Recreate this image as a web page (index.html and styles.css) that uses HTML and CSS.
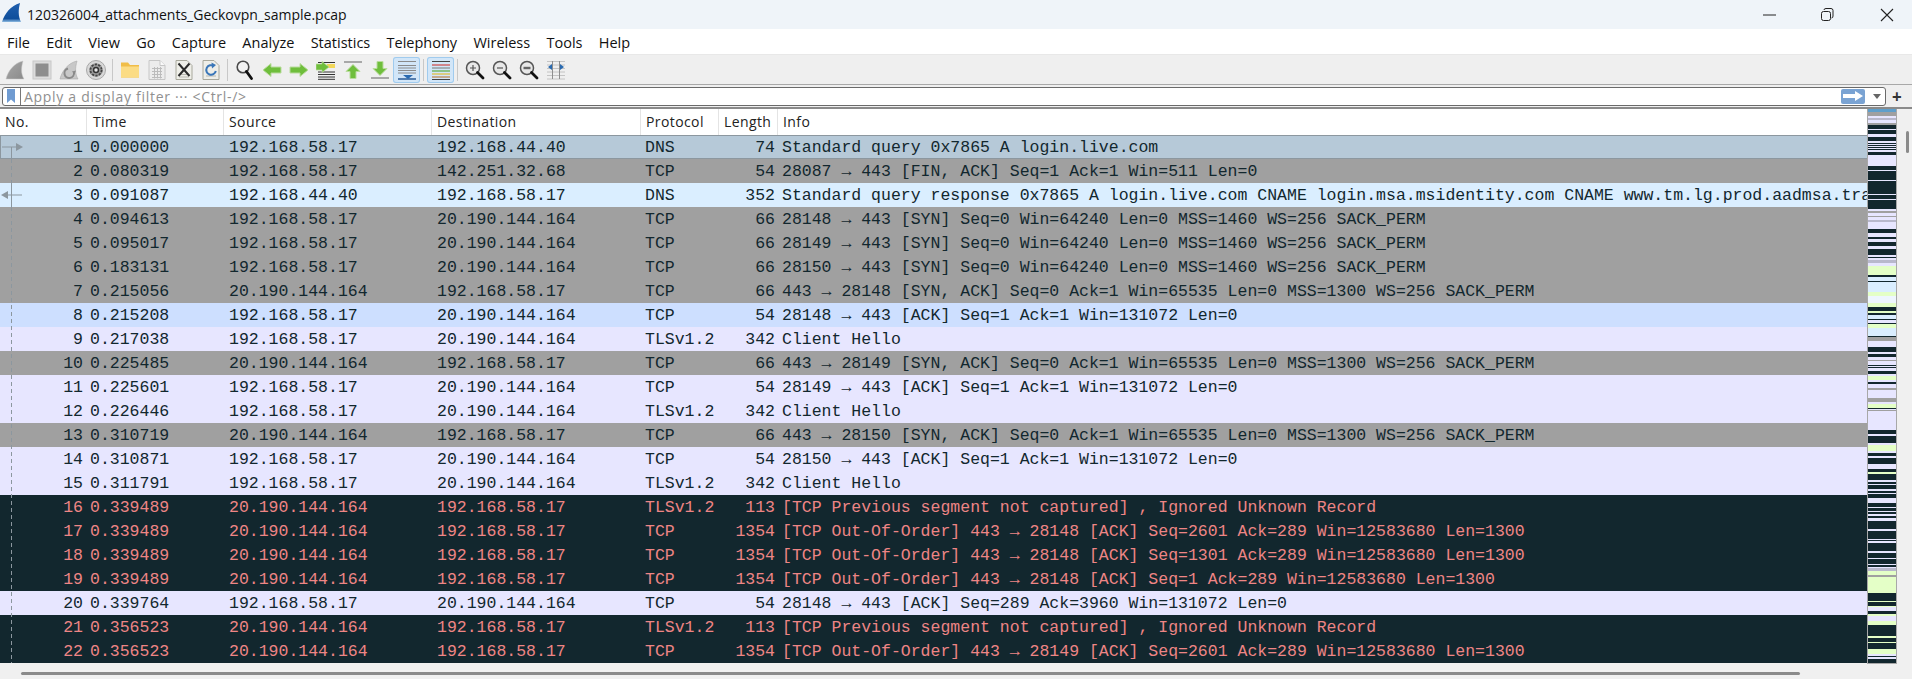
FILE: index.html
```html
<!DOCTYPE html>
<html lang="en">
<head>
<meta charset="utf-8">
<title>120326004_attachments_Geckovpn_sample.pcap</title>
<link rel="stylesheet" href="styles.css">
</head>
<body>
<div class="window">
  <header class="titlebar">
    <svg class="app-icon" viewBox="0 0 20 20"><defs><linearGradient id="finb" x1="0" y1="0" x2="0" y2="1"><stop offset="0" stop-color="#1f5fae"/><stop offset="0.82" stop-color="#0f4f9c"/><stop offset="1" stop-color="#8fbce2"/></linearGradient></defs><path d="M0 20 C3 11 9 3 19 0 C17 7 17 14 20 20 Z" fill="url(#finb)"/></svg>
    <span class="title-text">120326004_attachments_Geckovpn_sample.pcap</span>
    <div class="win-controls">
      <svg class="win-btn" viewBox="0 0 58 16"><path d="M0 8 H13" stroke="#222" stroke-width="1" fill="none"/></svg>
      <svg class="win-btn" viewBox="0 0 58 16"><rect x="0.500" y="4.500" width="9" height="9" rx="2" stroke="#222" fill="none"/><path d="M3 3 Q3 1.500 5 1.500 H10 Q12 1.500 12 3.500 V9 Q12 11 10.500 11" stroke="#222" fill="none"/></svg>
      <svg class="win-btn last" viewBox="0 0 16 16"><path d="M2 2 L14 14 M14 2 L2 14" stroke="#222" stroke-width="1.100" fill="none"/></svg>
    </div>
  </header>
  <nav class="menubar">
    <span>File</span><span>Edit</span><span>View</span><span>Go</span><span>Capture</span><span>Analyze</span><span>Statistics</span><span>Telephony</span><span>Wireless</span><span>Tools</span><span>Help</span>
  </nav>
  <div class="toolbar">
    <div class="tool"><svg viewBox="0 0 20 20"><defs><linearGradient id="fing" x1="0" y1="0" x2="1" y2="1"><stop offset="0" stop-color="#a8a8a8"/><stop offset="1" stop-color="#8a8a8a"/></linearGradient></defs><path d="M1 19 C3 11 9 3 18 1 C16 8 16 14 19 19 Z" fill="url(#fing)" stroke="#c8c8c8" stroke-width=".5"/></svg></div>
    <div class="tool"><svg viewBox="0 0 20 20"><rect x="1" y="1" width="18" height="18" fill="#dcdcdc" stroke="#c8c8c8"/><rect x="3.500" y="3.500" width="13" height="13" fill="#8e8e8e"/></svg></div>
    <div class="tool"><svg viewBox="0 0 20 20"><path d="M1 19 C3 11 9 3 18 1 C16 8 16 14 19 19 Z" fill="#c8c8c8" stroke="#aaa" stroke-width=".6"/><path d="M9 8.500 A4.800 4.800 0 1 0 15 12.500" fill="none" stroke="#8a8a8a" stroke-width="2"/><path d="M13 11.500 L17 10.500 L15.500 14.500 Z" fill="#8a8a8a"/></svg></div>
    <div class="tool"><svg viewBox="0 0 20 20"><circle cx="10" cy="10" r="9.500" fill="#d8d8d8" stroke="#a8a8a8"/><circle cx="10" cy="10" r="6.800" fill="#9a9a9a"/><circle cx="10" cy="10" r="5.600" fill="none" stroke="#444" stroke-width="1.800" stroke-dasharray="2.200 1.300"/><circle cx="10" cy="10" r="3.200" fill="#333"/><circle cx="10" cy="10" r="1.700" fill="#e6e6e6"/></svg></div>
    <i class="sep"></i>
    <div class="tool"><svg viewBox="0 0 20 20"><path d="M1 2.500 H8 L10 5 H19 V17.500 H1 Z" fill="#f0bd48"/><rect x="1" y="6.500" width="18" height="11" fill="#fbdc85"/></svg></div>
    <div class="tool"><svg viewBox="0 0 20 20"><path d="M2 .5 H13 L18 5.500 V19.500 H2 Z" fill="#ececec" stroke="#c6c6c6"/><path d="M13 .5 V5.500 H18" fill="#fafafa" stroke="#c6c6c6"/><path d="M5 8.500 H15 M5 11.500 H15 M5 14.500 H15 M5 17.500 H15 M7.500 7 V18.500 M10.500 7 V18.500 M13.500 7 V18.500" stroke="#bcbcbc"/></svg></div>
    <div class="tool"><svg viewBox="0 0 20 20"><path d="M2 .5 H13 L18 5.500 V19.500 H2 Z" fill="#eeeee8" stroke="#a8a89c"/><path d="M5 14.500 H15 M5 17 H15" stroke="#b8b8b0"/><path d="M4.500 3.500 L15.500 16 M15.500 3.500 L4.500 16" stroke="#2a2a2a" stroke-width="2"/></svg></div>
    <div class="tool"><svg viewBox="0 0 20 20"><path d="M2 .5 H13 L18 5.500 V19.500 H2 Z" fill="#eeeee8" stroke="#a8a89c"/><path d="M5 16 H15" stroke="#b8b8b0"/><path d="M12.800 6 A4.800 4.800 0 1 0 14.800 11" fill="none" stroke="#3a76b8" stroke-width="2"/><path d="M10.500 2.500 L15 5 L11 8.500 Z" fill="#3a76b8"/></svg></div>
    <i class="sep"></i>
    <div class="tool"><svg viewBox="0 0 20 20"><circle cx="8" cy="7" r="5.800" fill="#f2f2f2" stroke="#4a4a4a" stroke-width="1.600"/><path d="M11.500 11.500 L16.500 18.500" stroke="#111" stroke-width="2.800" stroke-linecap="round"/></svg></div>
    <div class="tool"><svg viewBox="0 0 20 20"><path d="M1 10 L9 3.500 V7 H19 V13 H9 V16.500 Z" fill="#6fbe3c" stroke="#b9dc9c"/></svg></div>
    <div class="tool"><svg viewBox="0 0 20 20"><path d="M19 10 L11 3.500 V7 H1 V13 H11 V16.500 Z" fill="#6fbe3c" stroke="#b9dc9c"/></svg></div>
    <div class="tool"><svg viewBox="0 0 20 20"><path d="M2 2.500 H19 M2 12 H19 M2 14.500 H19 M2 17 H19 M2 19.300 H19" stroke="#333"/><rect x="11" y="4" width="8" height="4" fill="#f2d75a"/><path d="M13 7 L6 1.500 V4 H0 V10 H6 V12.500 Z" fill="#6fbe3c" stroke="#b9dc9c" stroke-width=".7"/></svg></div>
    <div class="tool"><svg viewBox="0 0 20 20"><rect x="1" y="1" width="18" height="2" fill="#a8a8a8"/><path d="M10 4.500 L17 11.500 H13 V18.500 H7 V11.500 H3 Z" fill="#6fbe3c" stroke="#b9dc9c"/></svg></div>
    <div class="tool"><svg viewBox="0 0 20 20"><rect x="1" y="17" width="18" height="2" fill="#a8a8a8"/><path d="M10 15.500 L17 8.500 H13 V1.500 H7 V8.500 H3 Z" fill="#6fbe3c" stroke="#b9dc9c"/></svg></div>
    <div class="tool on"><svg viewBox="0 0 20 20"><path d="M1 1.500 H19 M1 5.500 H19 M1 8 H19 M1 10.500 H19 M1 13 H19" stroke="#8a8a8a"/><path d="M1 19 H19" stroke="#1d4f8e" stroke-width="1.400"/><path d="M6 15 H16 L11 19 Z" fill="#2a6ab0"/></svg></div>
    <i class="sep"></i>
    <div class="tool on"><svg viewBox="0 0 20 20"><path d="M1 1.500 H19" stroke="#444"/><path d="M1 5 H19" stroke="#d05050" stroke-width="1.300"/><path d="M1 8 H19" stroke="#777"/><path d="M1 11 H19" stroke="#66b04a" stroke-width="1.300"/><path d="M1 14 H19" stroke="#e0c040" stroke-width="1.300"/><path d="M1 17 H19" stroke="#c08a50" stroke-width="1.300"/><path d="M1 19.500 H19" stroke="#444"/></svg></div>
    <i class="sep"></i>
    <div class="tool"><svg viewBox="0 0 20 20"><circle cx="8" cy="8" r="6.500" fill="#e8e8e8" stroke="#555" stroke-width="1.500"/><path d="M5 8 H11 M8 5 V11" stroke="#555" stroke-width="1.200"/><path d="M12.500 12.500 L18 18" stroke="#111" stroke-width="2.800" stroke-linecap="round"/></svg></div>
    <div class="tool"><svg viewBox="0 0 20 20"><circle cx="8" cy="8" r="6.500" fill="#e8e8e8" stroke="#555" stroke-width="1.500"/><path d="M5 8 H11" stroke="#555" stroke-width="1.200"/><path d="M12.500 12.500 L18 18" stroke="#111" stroke-width="2.800" stroke-linecap="round"/></svg></div>
    <div class="tool"><svg viewBox="0 0 20 20"><circle cx="8" cy="8" r="6.500" fill="#e8e8e8" stroke="#555" stroke-width="1.500"/><rect x="4.500" y="6.800" width="7" height="2.400" fill="#666"/><path d="M12.500 12.500 L18 18" stroke="#111" stroke-width="2.800" stroke-linecap="round"/></svg></div>
    <div class="tool"><svg viewBox="0 0 20 20"><path d="M1 1.500 H19 M1 5 H19 M1 8.500 H19 M1 12 H19 M1 15.500 H19 M1 19 H19" stroke="#c4c4c4"/><path d="M6.500 1 V19 M13.500 1 V19" stroke="#8e8e8e"/><path d="M6 4 V10 L2 7 Z M14 4 V10 L18 7 Z" fill="#2a6ab0"/></svg></div>
  </div>
  <div class="filterbar">
    <div class="filter-input">
      <svg class="bookmark" viewBox="0 0 8 14"><path d="M0 0 H8 V14 L4 10.500 L0 14 Z" fill="#6f9bd1"/></svg>
      <span class="placeholder">Apply a display filter ··· &lt;Ctrl-/&gt;</span>
      <span class="apply"><svg viewBox="0 0 20 10"><path d="M0 3 H12 V0 L20 5 L12 10 V7 H0 Z" fill="#fff"/></svg></span>
      <span class="drop"></span>
    </div>
    <span class="plus">+</span>
  </div>
  <main class="content">
    <section class="packets">
      <div class="list-head">
        <span>No.</span><span>Time</span><span>Source</span><span>Destination</span><span>Protocol</span><span>Length</span><span>Info</span>
      </div>
      <div class="rows">
        <svg class="related" viewBox="0 0 24 528"><path d="M11.500 12 V24 M11.500 48 V72" stroke="#8c979f" fill="none"/><path d="M11.500 24 V48 M11.500 72 V528" stroke="#8c979f" stroke-dasharray="4 3" fill="none"/><path d="M2 12 H17 M6 60 H22" stroke="#8c979f" fill="none"/><path d="M16 8 L23 12 L16 16 Z M8 56 L1 60 L8 64 Z" fill="#8c979f"/></svg>
        <div class="row sel"><span>1</span><span>0.000000</span><span>192.168.58.17</span><span>192.168.44.40</span><span>DNS</span><span>74</span><span>Standard query 0x7865 A login.live.com</span></div>
        <div class="row syn"><span>2</span><span>0.080319</span><span>192.168.58.17</span><span>142.251.32.68</span><span>TCP</span><span>54</span><span>28087 → 443 [FIN, ACK] Seq=1 Ack=1 Win=511 Len=0</span></div>
        <div class="row dns"><span>3</span><span>0.091087</span><span>192.168.44.40</span><span>192.168.58.17</span><span>DNS</span><span>352</span><span>Standard query response 0x7865 A login.live.com CNAME login.msa.msidentity.com CNAME www.tm.lg.prod.aadmsa.trafficmanager.net</span></div>
        <div class="row syn"><span>4</span><span>0.094613</span><span>192.168.58.17</span><span>20.190.144.164</span><span>TCP</span><span>66</span><span>28148 → 443 [SYN] Seq=0 Win=64240 Len=0 MSS=1460 WS=256 SACK_PERM</span></div>
        <div class="row syn"><span>5</span><span>0.095017</span><span>192.168.58.17</span><span>20.190.144.164</span><span>TCP</span><span>66</span><span>28149 → 443 [SYN] Seq=0 Win=64240 Len=0 MSS=1460 WS=256 SACK_PERM</span></div>
        <div class="row syn"><span>6</span><span>0.183131</span><span>192.168.58.17</span><span>20.190.144.164</span><span>TCP</span><span>66</span><span>28150 → 443 [SYN] Seq=0 Win=64240 Len=0 MSS=1460 WS=256 SACK_PERM</span></div>
        <div class="row syn"><span>7</span><span>0.215056</span><span>20.190.144.164</span><span>192.168.58.17</span><span>TCP</span><span>66</span><span>443 → 28148 [SYN, ACK] Seq=0 Ack=1 Win=65535 Len=0 MSS=1300 WS=256 SACK_PERM</span></div>
        <div class="row ack"><span>8</span><span>0.215208</span><span>192.168.58.17</span><span>20.190.144.164</span><span>TCP</span><span>54</span><span>28148 → 443 [ACK] Seq=1 Ack=1 Win=131072 Len=0</span></div>
        <div class="row tcp"><span>9</span><span>0.217038</span><span>192.168.58.17</span><span>20.190.144.164</span><span>TLSv1.2</span><span>342</span><span>Client Hello</span></div>
        <div class="row syn"><span>10</span><span>0.225485</span><span>20.190.144.164</span><span>192.168.58.17</span><span>TCP</span><span>66</span><span>443 → 28149 [SYN, ACK] Seq=0 Ack=1 Win=65535 Len=0 MSS=1300 WS=256 SACK_PERM</span></div>
        <div class="row tcp"><span>11</span><span>0.225601</span><span>192.168.58.17</span><span>20.190.144.164</span><span>TCP</span><span>54</span><span>28149 → 443 [ACK] Seq=1 Ack=1 Win=131072 Len=0</span></div>
        <div class="row tcp"><span>12</span><span>0.226446</span><span>192.168.58.17</span><span>20.190.144.164</span><span>TLSv1.2</span><span>342</span><span>Client Hello</span></div>
        <div class="row syn"><span>13</span><span>0.310719</span><span>20.190.144.164</span><span>192.168.58.17</span><span>TCP</span><span>66</span><span>443 → 28150 [SYN, ACK] Seq=0 Ack=1 Win=65535 Len=0 MSS=1300 WS=256 SACK_PERM</span></div>
        <div class="row tcp"><span>14</span><span>0.310871</span><span>192.168.58.17</span><span>20.190.144.164</span><span>TCP</span><span>54</span><span>28150 → 443 [ACK] Seq=1 Ack=1 Win=131072 Len=0</span></div>
        <div class="row tcp"><span>15</span><span>0.311791</span><span>192.168.58.17</span><span>20.190.144.164</span><span>TLSv1.2</span><span>342</span><span>Client Hello</span></div>
        <div class="row bad"><span>16</span><span>0.339489</span><span>20.190.144.164</span><span>192.168.58.17</span><span>TLSv1.2</span><span>113</span><span>[TCP Previous segment not captured] , Ignored Unknown Record</span></div>
        <div class="row bad"><span>17</span><span>0.339489</span><span>20.190.144.164</span><span>192.168.58.17</span><span>TCP</span><span>1354</span><span>[TCP Out-Of-Order] 443 → 28148 [ACK] Seq=2601 Ack=289 Win=12583680 Len=1300</span></div>
        <div class="row bad"><span>18</span><span>0.339489</span><span>20.190.144.164</span><span>192.168.58.17</span><span>TCP</span><span>1354</span><span>[TCP Out-Of-Order] 443 → 28148 [ACK] Seq=1301 Ack=289 Win=12583680 Len=1300</span></div>
        <div class="row bad"><span>19</span><span>0.339489</span><span>20.190.144.164</span><span>192.168.58.17</span><span>TCP</span><span>1354</span><span>[TCP Out-Of-Order] 443 → 28148 [ACK] Seq=1 Ack=289 Win=12583680 Len=1300</span></div>
        <div class="row tcp"><span>20</span><span>0.339764</span><span>192.168.58.17</span><span>20.190.144.164</span><span>TCP</span><span>54</span><span>28148 → 443 [ACK] Seq=289 Ack=3960 Win=131072 Len=0</span></div>
        <div class="row bad"><span>21</span><span>0.356523</span><span>20.190.144.164</span><span>192.168.58.17</span><span>TLSv1.2</span><span>113</span><span>[TCP Previous segment not captured] , Ignored Unknown Record</span></div>
        <div class="row bad"><span>22</span><span>0.356523</span><span>20.190.144.164</span><span>192.168.58.17</span><span>TCP</span><span>1354</span><span>[TCP Out-Of-Order] 443 → 28149 [ACK] Seq=2601 Ack=289 Win=12583680 Len=1300</span></div>
      </div>
      <div class="hscroll"><div class="hthumb"></div></div>
    </section>
    <aside class="minimap-col"><div class="minimap"></div></aside>
    <aside class="vscroll"><div class="vthumb"></div></aside>
  </main>
</div>
</body>
</html>
```

FILE: styles.css
```css
* { box-sizing: border-box; }
html, body { margin: 0; padding: 0; }
body { width: 1912px; height: 679px; overflow: hidden; background: #f0f0f0; font-family: "Open Sans", "Noto Sans", sans-serif; color: #1a1a1a; }
.window { display: flex; flex-direction: column; height: 679px; }

.titlebar { height: 29px; background: #eff4f9; display: flex; align-items: center; flex: none; }
.app-icon { width: 19px; height: 19px; margin: -4px 0 0 2px; flex: none; }
.title-text { font-size: 14px; margin-left: 6px; color: #111; white-space: nowrap; }
.win-controls { margin-left: auto; display: flex; align-items: center; padding-right: 17px; }
.win-btn { width: 58px; height: 16px; display: block; }
.win-btn.last { width: 16px; }

.menubar { height: 26px; background: #fff; border-bottom: 1px solid #e8e8e8; display: flex; align-items: center; padding: 1px 0 0 7px; gap: 16.3px; font-size: 14.5px; flex: none; color: #111; }

.toolbar { height: 29px; background: #efefef; display: flex; align-items: center; padding-left: 1px; flex: none; }
.tool { width: 27px; height: 26px; display: flex; align-items: center; justify-content: center; flex: none; border-radius: 3px; }
.tool svg { width: 20px; height: 20px; display: block; }
.tool.on { background: #d2e6f8; box-shadow: inset 0 0 0 1px #a0cbee; }
.sep { width: 7px; height: 22px; flex: none; display: block; background: linear-gradient(#c8c8c8, #c8c8c8) center / 1px 100% no-repeat; }

.filterbar { height: 25px; background: #efefef; border-top: 1px solid #a8a8a8; border-bottom: 2px solid #8a8a8a; display: flex; align-items: center; padding-left: 2px; flex: none; }
.filter-input { width: 1884px; height: 19px; background: #fff; border: 1px solid #6a6a6a; border-radius: 3px; display: flex; align-items: center; flex: none; }
.bookmark { width: 8px; height: 14px; margin-left: 4px; flex: none; }
.placeholder { font-size: 14px; color: #909090; margin-left: 5px; padding-left: 3px; border-left: 1px solid #777; line-height: 17px; letter-spacing: .7px; white-space: nowrap; }
.apply { margin-left: auto; width: 24px; height: 15px; background: #7aa3d3; border-radius: 2px; display: flex; align-items: center; justify-content: center; }
.apply svg { width: 20px; height: 10px; display: block; }
.drop { width: 0; height: 0; margin: 0 4px 0 8px; border-left: 4px solid transparent; border-right: 4px solid transparent; border-top: 5px solid #666; }
.plus { font-size: 17px; font-weight: 700; margin-left: 6px; line-height: 17px; color: #333; }

.content { display: flex; flex: 1; min-height: 0; }
.packets { width: 1867px; flex: none; display: flex; flex-direction: column; background: #f0f0f0; }

.list-head, .row { display: grid; grid-template-columns: 87px 137px 208px 209px 78px 59px 1fr; }
.list-head { height: 26px; background: #fff; font-size: 14px; letter-spacing: .4px; color: #222; align-items: center; flex: none; }
.list-head span { height: 26px; line-height: 25px; padding-left: 5px; border-right: 1px solid #e4e4e4; white-space: nowrap; }
.list-head span:last-child { border-right: 0; }
.list-head span:nth-child(2) { padding-left: 6px; }

.rows { position: relative; flex: none; }
.related { position: absolute; left: 0; top: 0; width: 24px; height: 528px; z-index: 1; }
.row { height: 24px; line-height: 26px; font-family: "Liberation Mono", "DejaVu Sans Mono", monospace; font-size: 16.5px; color: #12272e; white-space: nowrap; overflow: hidden; }
.row span { overflow: hidden; padding-left: 5px; }
.row span:nth-child(1) { text-align: right; padding: 0 4px 0 0; }
.row span:nth-child(2) { padding-left: 3px; }
.row span:nth-child(5) { padding-left: 4px; }
.row span:nth-child(6) { text-align: right; padding: 0 3px 0 0; }
.row span:nth-child(7) { padding-left: 4px; }
.sel { background: #b6c9d8; box-shadow: inset 0 1px 0 #8c979f, inset 1px 0 0 #8c979f, inset 0 -1px 0 #8c979f; }
.syn { background: #a0a0a0; }
.dns { background: #daeeff; }
.ack { background: #cddfff; }
.tcp { background: #e7e6ff; }
.bad { background: #12272e; color: #ee8585; }

.hscroll { flex: 1; padding: 9px 0 0 21px; }
.hthumb { width: 1779px; height: 3px; background: #8a8a8a; border-radius: 2px; }

.minimap-col { width: 30px; flex: none; }
.minimap {
  --d: #12272e; --l: #e7e6ff; --g: #a0a0a0; --b: #daeeff; --y: #e4ffc7; --m: #b8b8cc;
  width: 30px; height: 555px;
  border-left: 1px solid #a8a8a8; border-right: 1px solid #a8a8a8; border-bottom: 1px solid #a8a8a8;
  background-size: 100% 700px; background-position: 0 -109px; background-repeat: no-repeat; background-origin: border-box;
  background-image: linear-gradient(to bottom,
    #5f9fcb 0 112px, var(--g) 112px 116px, var(--l) 116px 118px, var(--m) 118px 120px, var(--l) 120px 123px, var(--g) 123px 125px,
    var(--d) 125px 129px, var(--l) 129px 130px, var(--d) 130px 134px, var(--l) 134px 137px, var(--d) 137px 141px, var(--l) 141px 143px,
    var(--d) 143px 144px, var(--l) 144px 145px, var(--d) 145px 146px, var(--l) 146px 147px, var(--d) 147px 148px, var(--l) 148px 149px,
    var(--d) 149px 150px, var(--l) 150px 152px, var(--d) 152px 155px, var(--l) 155px 166px, var(--d) 166px 170px, var(--l) 170px 171px,
    var(--d) 171px 180px, var(--l) 180px 181px, var(--d) 181px 194px, var(--l) 194px 195px, var(--d) 195px 199px, var(--l) 199px 200px,
    var(--d) 200px 209px, var(--l) 209px 211px, var(--g) 211px 213px, var(--l) 213px 216px, var(--g) 216px 217px, var(--l) 217px 220px,
    var(--m) 220px 222px, var(--l) 222px 229px, var(--d) 229px 233px, var(--l) 233px 237px, var(--d) 237px 239px, var(--l) 239px 242px,
    var(--d) 242px 246px, var(--l) 246px 249px, var(--d) 249px 255px, var(--l) 255px 257px, var(--d) 257px 258px, var(--l) 258px 260px,
    var(--m) 260px 263px, var(--l) 263px 266px, var(--y) 266px 275px, var(--d) 275px 277px, var(--b) 277px 281px, var(--d) 281px 282px,
    var(--b) 282px 292px, var(--y) 292px 296px, #eef6ff 296px 303px, var(--y) 303px 307px, var(--d) 307px 311px, var(--y) 311px 313px,
    var(--d) 313px 315px, var(--b) 315px 319px, var(--d) 319px 320px, var(--l) 320px 323px, var(--d) 323px 324px, var(--y) 324px 328px,
    var(--b) 328px 336px, var(--d) 336px 337px, var(--g) 337px 341px, var(--l) 341px 347px, var(--d) 347px 352px, var(--l) 352px 354px,
    var(--d) 354px 357px, var(--l) 357px 360px, var(--g) 360px 361px, var(--l) 361px 365px, var(--d) 365px 366px, var(--l) 366px 367px,
    var(--d) 367px 368px, var(--l) 368px 371px, var(--d) 371px 374px, var(--l) 374px 376px, var(--y) 376px 380px, var(--l) 380px 382px,
    var(--d) 382px 384px, var(--l) 384px 388px, var(--g) 388px 390px, var(--l) 390px 398px, var(--g) 398px 402px, var(--l) 402px 404px,
    var(--y) 404px 408px, var(--d) 408px 409px, var(--l) 409px 410px, var(--g) 410px 411px, var(--l) 411px 430px, var(--d) 430px 434px,
    var(--l) 434px 436px, var(--d) 436px 443px, var(--l) 443px 445px, var(--y) 445px 451px, var(--l) 451px 453px, var(--d) 453px 456px,
    var(--l) 456px 458px, var(--d) 458px 464px, var(--l) 464px 469px, var(--d) 469px 472px, var(--y) 472px 474px, var(--d) 474px 480px,
    var(--l) 480px 482px, var(--d) 482px 484px, var(--l) 484px 485px, var(--d) 485px 489px, var(--l) 489px 491px, var(--d) 491px 493px,
    var(--l) 493px 494px, var(--d) 494px 498px, var(--l) 498px 503px, var(--d) 503px 507px, var(--l) 507px 508px, var(--d) 508px 511px,
    var(--l) 511px 512px, var(--d) 512px 514px, var(--l) 514px 516px, var(--d) 516px 518px, var(--l) 518px 521px, var(--d) 521px 529px,
    var(--l) 529px 531px, var(--d) 531px 539px, var(--l) 539px 540px, var(--d) 540px 541px, var(--l) 541px 543px, var(--d) 543px 551px,
    var(--l) 551px 553px, var(--d) 553px 558px, var(--l) 558px 559px, var(--d) 559px 564px, var(--l) 564px 565px, var(--d) 565px 567px,
    var(--l) 567px 568px, var(--m) 568px 571px, var(--y) 571px 575px, var(--g) 575px 577px, var(--y) 577px 593px, var(--d) 593px 601px,
    var(--y) 601px 602px, var(--d) 602px 606px, var(--y) 606px 607px, var(--l) 607px 611px, var(--d) 611px 614px, var(--y) 614px 616px,
    var(--l) 616px 621px, var(--y) 621px 625px, var(--d) 625px 636px, var(--y) 636px 638px, var(--d) 638px 642px, var(--y) 642px 643px,
    var(--d) 643px 649px, var(--y) 649px 654px, var(--l) 654px 656px, var(--d) 656px 657px, var(--l) 657px 659px, var(--d) 659px 700px);
}

.vscroll { flex: 1; padding: 22px 0 0 9px; background: #f0f0f0; }
.vthumb { width: 3px; height: 22px; background: #8a8a8a; border-radius: 2px; }
```
